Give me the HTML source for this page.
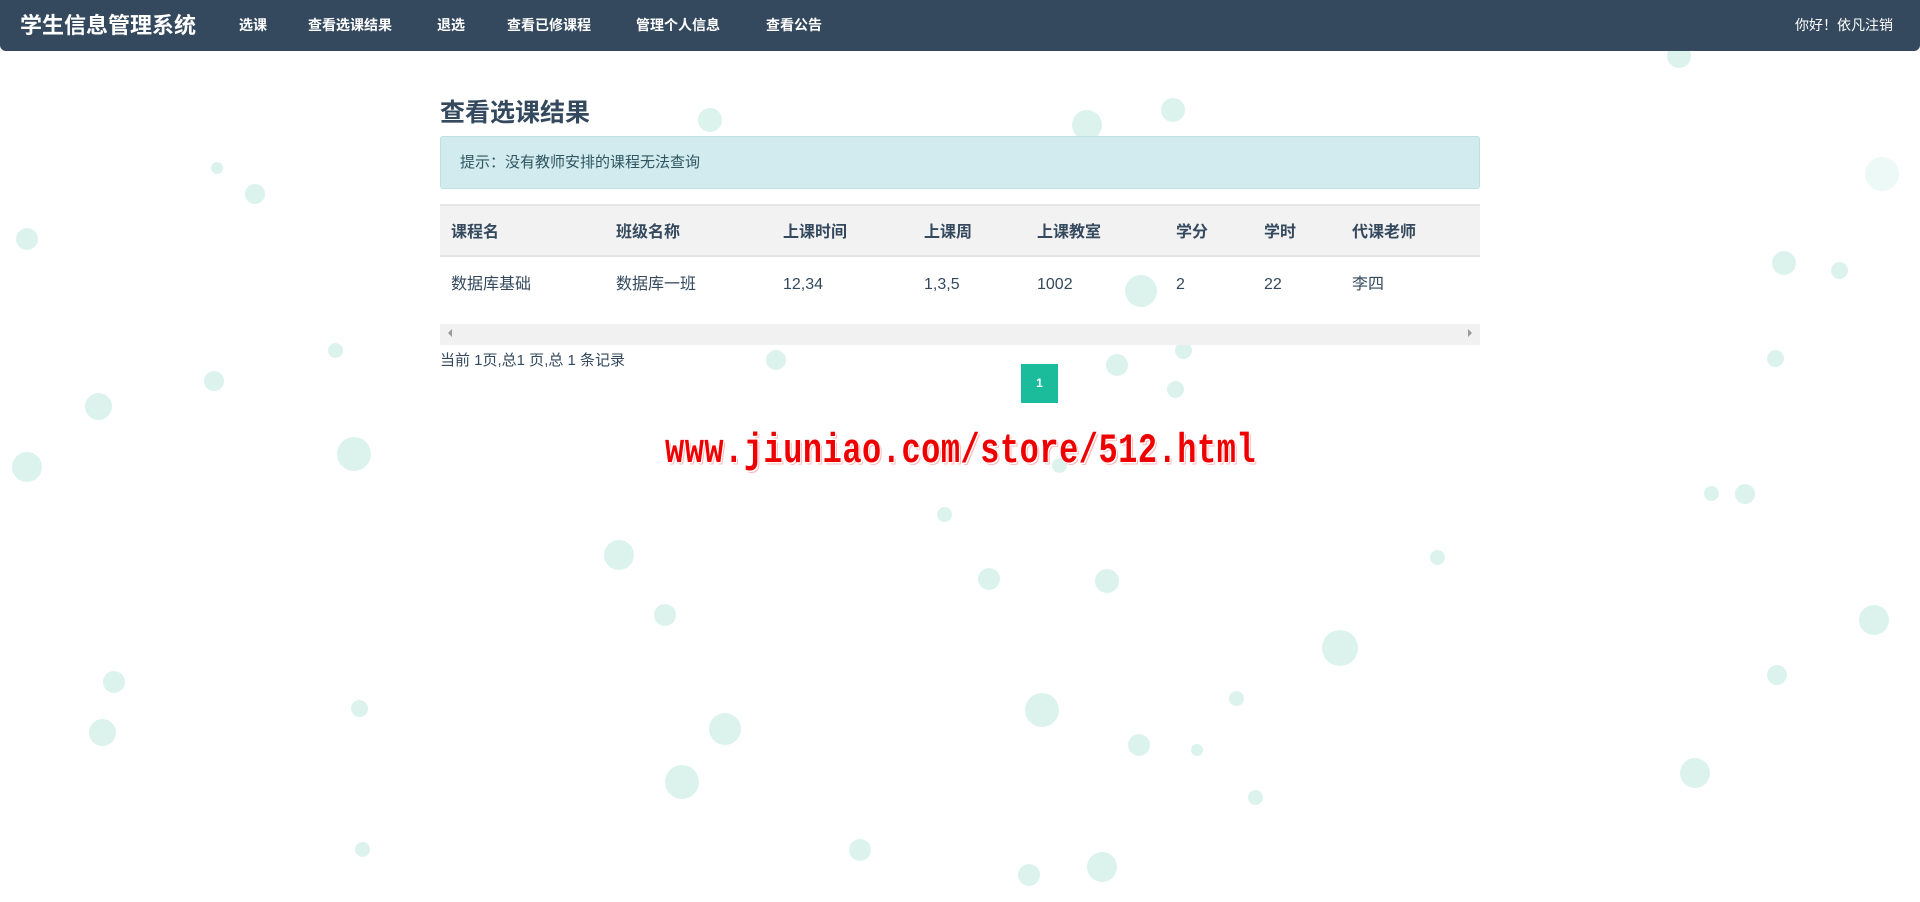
<!DOCTYPE html>
<html><head><meta charset="utf-8"><style>
*{margin:0;padding:0;box-sizing:border-box}
body{width:1920px;height:902px;background:#fff;font-family:"Liberation Sans","Noto Sans CJK SC",sans-serif;position:relative;overflow:hidden;color:#34495e}
.b{position:absolute;border-radius:50%;background:#dcf3ed}
.nav{position:absolute;left:0;top:0;width:1920px;height:51px;background:#34495e;border-radius:0 0 6px 6px}
.nav span{position:absolute;top:0;line-height:51px;color:#fff;font-weight:bold;font-size:14px}
.nav .brand{font-size:22px;left:20px}
.c{position:absolute;left:440px;width:1040px}
h1{position:absolute;left:440px;top:93px;font-size:25px;font-weight:bold;color:#34495e}
.alert{top:136px;height:53px;background:#d2ebee;border:1px solid #bfe1e6;border-radius:3px;color:#2f5561;font-size:15px;line-height:51px;padding-left:19px}
.th{top:204px;height:53px;background:#f2f2f2;border-top:2px solid #e6e6e6;border-bottom:2px solid #e3e3e3}
.t{position:absolute;font-size:16px}
.th .t{font-weight:bold;top:2px;line-height:49px}
.tr{top:257px;height:60px}
.tr .t{line-height:56px;top:0}
.sb{top:324px;height:21px;background:#f1f1f1}
.pg{position:absolute;left:1021px;top:364px;width:37px;height:39px;background:#1abc9c;color:#fff;font-size:12px;text-align:center;line-height:39px;font-weight:bold}
.wm{position:absolute;left:665px;top:427px;font-family:"Liberation Mono",monospace;font-weight:bold;font-size:32px;color:#e00;letter-spacing:0.5px;text-shadow:1px 1px 0 #fff,-1px -1px 0 #fff,2px 2px 0 #fbb;transform:scaleY(1.3);transform-origin:top left}
</style></head><body>
<div class="b" style="left:698px;top:108px;width:24px;height:24px"></div>
<div class="b" style="left:1072px;top:110px;width:30px;height:30px"></div>
<div class="b" style="left:1161px;top:98px;width:24px;height:24px"></div>
<div class="b" style="left:245px;top:184px;width:20px;height:20px"></div>
<div class="b" style="left:16px;top:228px;width:22px;height:22px"></div>
<div class="b" style="left:85px;top:393px;width:27px;height:27px"></div>
<div class="b" style="left:12px;top:452px;width:30px;height:30px"></div>
<div class="b" style="left:337px;top:437px;width:34px;height:34px"></div>
<div class="b" style="left:204px;top:371px;width:20px;height:20px"></div>
<div class="b" style="left:328px;top:343px;width:15px;height:15px"></div>
<div class="b" style="left:766px;top:350px;width:20px;height:20px"></div>
<div class="b" style="left:1106px;top:354px;width:22px;height:22px"></div>
<div class="b" style="left:1175px;top:342px;width:17px;height:17px"></div>
<div class="b" style="left:1125px;top:275px;width:32px;height:32px"></div>
<div class="b" style="left:1167px;top:381px;width:17px;height:17px"></div>
<div class="b" style="left:1767px;top:350px;width:17px;height:17px"></div>
<div class="b" style="left:1772px;top:251px;width:24px;height:24px"></div>
<div class="b" style="left:1831px;top:262px;width:17px;height:17px"></div>
<div class="b" style="left:1865px;top:157px;width:34px;height:34px;opacity:.5"></div>
<div class="b" style="left:1667px;top:44px;width:24px;height:24px"></div>
<div class="b" style="left:604px;top:540px;width:30px;height:30px"></div>
<div class="b" style="left:654px;top:604px;width:22px;height:22px"></div>
<div class="b" style="left:978px;top:568px;width:22px;height:22px"></div>
<div class="b" style="left:1095px;top:569px;width:24px;height:24px"></div>
<div class="b" style="left:1322px;top:630px;width:36px;height:36px"></div>
<div class="b" style="left:1859px;top:605px;width:30px;height:30px"></div>
<div class="b" style="left:1767px;top:665px;width:20px;height:20px"></div>
<div class="b" style="left:103px;top:671px;width:22px;height:22px"></div>
<div class="b" style="left:89px;top:719px;width:27px;height:27px"></div>
<div class="b" style="left:351px;top:700px;width:17px;height:17px"></div>
<div class="b" style="left:709px;top:713px;width:32px;height:32px"></div>
<div class="b" style="left:1025px;top:693px;width:34px;height:34px"></div>
<div class="b" style="left:1128px;top:734px;width:22px;height:22px"></div>
<div class="b" style="left:665px;top:765px;width:34px;height:34px"></div>
<div class="b" style="left:849px;top:839px;width:22px;height:22px"></div>
<div class="b" style="left:1087px;top:852px;width:30px;height:30px"></div>
<div class="b" style="left:1018px;top:864px;width:22px;height:22px"></div>
<div class="b" style="left:355px;top:842px;width:15px;height:15px"></div>
<div class="b" style="left:1680px;top:758px;width:30px;height:30px"></div>
<div class="b" style="left:1248px;top:790px;width:15px;height:15px"></div>
<div class="b" style="left:1229px;top:691px;width:15px;height:15px"></div>
<div class="b" style="left:1191px;top:744px;width:12px;height:12px"></div>
<div class="b" style="left:937px;top:507px;width:15px;height:15px"></div>
<div class="b" style="left:1430px;top:550px;width:15px;height:15px"></div>
<div class="b" style="left:1704px;top:486px;width:15px;height:15px"></div>
<div class="b" style="left:1735px;top:484px;width:20px;height:20px"></div>
<div class="b" style="left:1052px;top:458px;width:15px;height:15px"></div>
<div class="b" style="left:211px;top:162px;width:12px;height:12px"></div>

<div class="nav">
<span class="brand">学生信息管理系统</span>
<span style="left:239px">选课</span>
<span style="left:308px">查看选课结果</span>
<span style="left:437px">退选</span>
<span style="left:507px">查看已修课程</span>
<span style="left:636px">管理个人信息</span>
<span style="left:766px">查看公告</span>
<span style="left:1795px;font-weight:normal;font-size:14px">你好！依凡注销</span>
</div>
<h1>查看选课结果</h1>
<div class="c alert">提示：没有教师安排的课程无法查询</div>
<div class="c th">
<span class="t" style="left:11px">课程名</span><span class="t" style="left:176px">班级名称</span><span class="t" style="left:343px">上课时间</span><span class="t" style="left:484px">上课周</span><span class="t" style="left:597px">上课教室</span><span class="t" style="left:736px">学分</span><span class="t" style="left:824px">学时</span><span class="t" style="left:912px">代课老师</span>
</div>
<div class="c tr">
<span class="t" style="left:11px">数据库基础</span><span class="t" style="left:176px">数据库一班</span><span class="t" style="left:343px">12,34</span><span class="t" style="left:484px">1,3,5</span><span class="t" style="left:597px">1002</span><span class="t" style="left:736px">2</span><span class="t" style="left:824px">22</span><span class="t" style="left:912px">李四</span>
</div>
<div class="c sb"><span style="position:absolute;left:8px;top:5px;border:4px solid transparent;border-right:4px solid #999;border-left:0"></span><span style="position:absolute;right:8px;top:5px;border:4px solid transparent;border-left:4px solid #999;border-right:0"></span></div>
<div style="position:absolute;left:440px;top:349px;font-size:15px;color:#34495e">当前 1页,总1 页,总 1 条记录</div>
<div class="pg">1</div>
<div class="wm">www.jiuniao.com/store/512.html</div>
</body></html>
